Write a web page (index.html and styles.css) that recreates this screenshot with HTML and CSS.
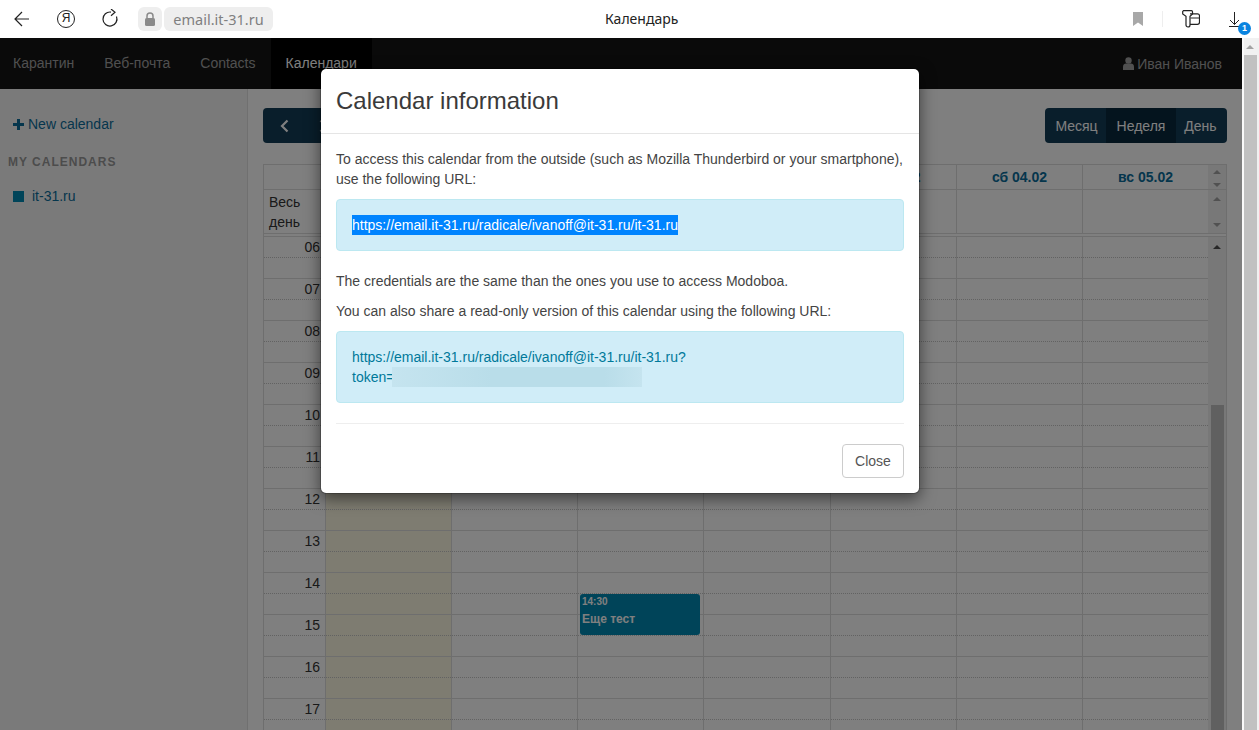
FILE: index.html
```html
<!DOCTYPE html>
<html lang="ru">
<head>
    <meta charset="utf-8"/>
    <title>Календарь</title>
    <link rel="stylesheet" href="styles.css">
</head>
<body>
    <div class="toolbar">
        <div class="tb-left">
            <svg class="tb-back" width="16" height="16" viewBox="0 0 16 16"><path d="M15 8H1M8 1L1 8l7 7" fill="none" stroke="#222" stroke-width="1.2"/></svg>
            <span class="tb-ya">Я</span>
            <svg class="tb-reload" width="18" height="20" viewBox="0 0 18 20"><path d="M15.500 7.500A7 7 0 1 1 10 3.100" fill="none" stroke="#222" stroke-width="1.200"/><path d="M10 0l4 3.300L10 6.800" fill="none" stroke="#222" stroke-width="1.200"/></svg>
            <span class="chip chip-lock">
                <svg width="12" height="14" viewBox="0 0 12 14"><path d="M3 6V4a3 3 0 0 1 6 0v2" fill="none" stroke="#8a8a8a" stroke-width="1.5"/><rect x="1" y="6" width="10" height="8" rx="1.5" fill="#8a8a8a"/></svg>
            </span>
            <span class="chip chip-url">email.it-31.ru</span>
        </div>
        <div class="tb-title">Календарь</div>
        <div class="tb-right">
            <svg width="10" height="14" viewBox="0 0 10 14"><path d="M0 0h10v14L5 10.5 0 14z" fill="#a8a8a8"/></svg>
            <span class="tb-sep"></span>
            <svg width="18" height="18" viewBox="0 0 18 18"><path d="M1.500.700h8a1 1 0 0 1 1 1V4L8 6.300V15a2 2 0 0 1-4 0V6.300L.700 4V1.500z" fill="none" stroke="#222" stroke-width="1.200"/><path d="M8 3.800h7.500a2 2 0 0 1 2 2v6.500a2 2 0 0 1-2 2H8M8.500 8h9" fill="none" stroke="#222" stroke-width="1.200"/></svg>
            <span class="tb-dl">
                <svg width="11" height="15" viewBox="0 0 11 15"><path d="M5.500 0v12.500M1 8l4.500 4.500L10 8M0 14.500h11" fill="none" stroke="#222" stroke-width="1"/></svg>
                <span class="tb-badge">1</span>
            </span>
        </div>
    </div>

    <div class="page">
        <div class="viewport">
            <nav class="navbar">
                <a class="nav-item nav-first">Карантин</a>
                <a class="nav-item">Веб-почта</a>
                <a class="nav-item">Contacts</a>
                <a class="nav-item active">Календари</a>
                <span class="nav-user">
                    <svg width="11" height="13" viewBox="0 0 11 13"><circle cx="5.500" cy="3.500" r="3.200" fill="currentColor"/><path d="M0 13V9.500C0 7.500 1.500 6.500 3 6.500h5c1.500 0 3 1 3 3V13z" fill="currentColor"/></svg>
                    Иван Иванов
                </span>
            </nav>

            <div class="content">
                <aside class="sidebar">
                    <a class="new-cal">
                        <svg width="11" height="11" viewBox="0 0 11 11"><path d="M4 0h3v4h4v3H7v4H4V7H0V4h4z" fill="currentColor"/></svg>
                        New calendar
                    </a>
                    <div class="side-header">MY CALENDARS</div>
                    <a class="side-cal"><span class="side-square"></span>it-31.ru</a>
                </aside>

                <main class="main">
                    <div class="cal-bar">
                        <div class="btn-group">
                            <button class="btn btn-prev">
                                <svg width="9" height="14" viewBox="0 0 9 14"><path d="M7.500 1.500L2 7l5.500 5.500" fill="none" stroke="currentColor" stroke-width="2.200"/></svg>
                            </button>
                            <button class="btn btn-next">
                                <svg width="9" height="14" viewBox="0 0 9 14"><path d="M1.500 1.500L7 7l-5.500 5.500" fill="none" stroke="currentColor" stroke-width="2.200"/></svg>
                            </button>
                        </div>
                        <div class="btn-group">
                            <button class="btn btn-month">Месяц</button>
                            <button class="btn btn-week">Неделя</button>
                            <button class="btn btn-day">День</button>
                        </div>
                    </div>

                    <div class="cal">
                        <div class="cal-row cal-head">
                            <div class="head-cell"></div>
                            <div class="head-cell day"></div>
                            <div class="head-cell day"></div>
                            <div class="head-cell day"></div>
                            <div class="head-cell day"></div>
                            <div class="head-cell day">пт 03.02</div>
                            <div class="head-cell day">сб 04.02</div>
                            <div class="head-cell day">вс 05.02</div>
                            <div class="scroll-cell scroll-head"><i class="arr up"></i><i class="arr down"></i></div>
                        </div>
                        <div class="cal-row cal-allday">
                            <div class="allday-label">Весь день</div>
                            <div class="day"></div><div class="day"></div><div class="day"></div><div class="day"></div><div class="day"></div><div class="day"></div><div class="day"></div>
                            <div class="scroll-cell scroll-allday"><i class="arr up"></i><i class="arr down"></i></div>
                        </div>

                        <div class="cal-body">
                            <div class="hours">
                                <div class="cal-row hour"><div class="cell time">06</div><div class="cell today"></div><div class="cell"></div><div class="cell"></div><div class="cell"></div><div class="cell"></div><div class="cell"></div><div class="cell"></div></div>
                                <div class="cal-row hour"><div class="cell time">07</div><div class="cell today"></div><div class="cell"></div><div class="cell"></div><div class="cell"></div><div class="cell"></div><div class="cell"></div><div class="cell"></div></div>
                                <div class="cal-row hour"><div class="cell time">08</div><div class="cell today"></div><div class="cell"></div><div class="cell"></div><div class="cell"></div><div class="cell"></div><div class="cell"></div><div class="cell"></div></div>
                                <div class="cal-row hour"><div class="cell time">09</div><div class="cell today"></div><div class="cell"></div><div class="cell"></div><div class="cell"></div><div class="cell"></div><div class="cell"></div><div class="cell"></div></div>
                                <div class="cal-row hour"><div class="cell time">10</div><div class="cell today"></div><div class="cell"></div><div class="cell"></div><div class="cell"></div><div class="cell"></div><div class="cell"></div><div class="cell"></div></div>
                                <div class="cal-row hour"><div class="cell time">11</div><div class="cell today"></div><div class="cell"></div><div class="cell"></div><div class="cell"></div><div class="cell"></div><div class="cell"></div><div class="cell"></div></div>
                                <div class="cal-row hour"><div class="cell time">12</div><div class="cell today"></div><div class="cell"></div><div class="cell"></div><div class="cell"></div><div class="cell"></div><div class="cell"></div><div class="cell"></div></div>
                                <div class="cal-row hour"><div class="cell time">13</div><div class="cell today"></div><div class="cell"></div><div class="cell"></div><div class="cell"></div><div class="cell"></div><div class="cell"></div><div class="cell"></div></div>
                                <div class="cal-row hour">
                                    <div class="cell time">14</div><div class="cell today"></div><div class="cell"></div>
                                    <div class="cell">
                                        <div class="event">
                                            <div class="event-time">14:30</div>
                                            <div class="event-title">Еще тест</div>
                                        </div>
                                    </div>
                                    <div class="cell"></div><div class="cell"></div><div class="cell"></div><div class="cell"></div>
                                </div>
                                <div class="cal-row hour"><div class="cell time">15</div><div class="cell today"></div><div class="cell"></div><div class="cell"></div><div class="cell"></div><div class="cell"></div><div class="cell"></div><div class="cell"></div></div>
                                <div class="cal-row hour"><div class="cell time">16</div><div class="cell today"></div><div class="cell"></div><div class="cell"></div><div class="cell"></div><div class="cell"></div><div class="cell"></div><div class="cell"></div></div>
                                <div class="cal-row hour"><div class="cell time">17</div><div class="cell today"></div><div class="cell"></div><div class="cell"></div><div class="cell"></div><div class="cell"></div><div class="cell"></div><div class="cell"></div></div>
                            </div>
                            <div class="scroll-body">
                                <i class="arr up arr-dark"></i>
                                <div class="scroll-thumb"></div>
                            </div>
                        </div>
                    </div>
                </main>
            </div>

            <div class="backdrop">
                <div class="modal">
                    <div class="modal-header">
                        <h4 class="modal-title">Calendar information</h4>
                    </div>
                    <div class="modal-body">
                        <p>To access this calendar from the outside (such as Mozilla Thunderbird or your smartphone), use the following URL:</p>
                        <div class="alert"><span class="selected">https://email.it-31.ru/radicale/ivanoff@it-31.ru/it-31.ru</span></div>
                        <p>The credentials are the same than the ones you use to access Modoboa.</p>
                        <p>You can also share a read-only version of this calendar using the following URL:</p>
                        <div class="alert">https://email.it-31.ru/radicale/ivanoff@it-31.ru/it-31.ru?<br>token=<span class="token"></span></div>
                        <hr class="divider">
                        <div class="modal-footer">
                            <button class="btn-close">Close</button>
                        </div>
                    </div>
                </div>
            </div>
        </div>

        <div class="scrollbar">
            <i class="arr up arr-page"></i>
            <div class="page-thumb"></div>
        </div>
    </div>
</body>
</html>
```

FILE: styles.css
```css
*{
    margin: 0;
    padding: 0;
    box-sizing: border-box;
}
body{
    height: 730px;
    overflow: hidden;
    background: white;
    color: #333;
    font-family: "Liberation Sans", Arial, sans-serif;
    font-size: 14px;
    line-height: 20px;
}

/* browser toolbar */
.toolbar{
    display: flex;
    align-items: center;
    height: 38px;
    background: white;
}
.tb-left{
    display: flex;
    align-items: center;
    flex: 0 0 605px;
}
.tb-back{
    margin-left: 14px;
}
.tb-ya{
    width: 18px;
    height: 18px;
    margin-left: 27px;
    border: 1.3px solid #222;
    border-radius: 50%;
    color: #222;
    font-size: 12px;
    line-height: 15px;
    text-align: center;
}
.tb-reload{
    margin-left: 26px;
}
.chip{
    display: flex;
    align-items: center;
    justify-content: center;
    height: 24px;
    background: #eeeeee;
    border-radius: 6px;
}
.chip-lock{
    width: 24px;
    margin-left: 19px;
}
.chip-url{
    width: 109px;
    margin-left: 2px;
    color: #808080;
    font-family: "Noto Sans", sans-serif;
    font-size: 14.5px;
}
.tb-title{
    color: #222;
    font-family: "Noto Sans", sans-serif;
    font-size: 14px;
}
.tb-right{
    display: flex;
    align-items: center;
    margin-left: auto;
    padding-right: 19px;
}
.tb-sep{
    width: 1px;
    height: 16px;
    margin: 0 19px;
    background: #eeeeee;
}
.tb-dl{
    position: relative;
    display: flex;
    margin-left: 29px;
}
.tb-badge{
    position: absolute;
    top: 10px;
    left: 9px;
    width: 13px;
    height: 13px;
    border-radius: 50%;
    background: #0a84e0;
    color: white;
    font-size: 9px;
    font-weight: bold;
    line-height: 13px;
    text-align: center;
}

/* page under the toolbar */
.page{
    display: flex;
    height: 692px;
}
.viewport{
    position: relative;
    flex: 1;
    overflow: hidden;
    background: white;
}
.scrollbar{
    flex: 0 0 17px;
    padding-top: 7px;
    background: #f1f1f1;
    border-left: 2px solid #fafafa;
    overflow: hidden;
}
.page-thumb{
    width: 13px;
    height: 700px;
    margin-top: 6px;
    background: #c1c1c1;
}

/* scrollbar arrows */
.arr{
    display: block;
    width: 0;
    height: 0;
    border-left: 4px solid transparent;
    border-right: 4px solid transparent;
}
.arr.up{
    border-bottom: 4px solid #a3a3a3;
}
.arr.down{
    border-top: 4px solid #a3a3a3;
}
.arr.up.arr-dark{
    border-bottom-color: #505050;
}
.arr.up.arr-page{
    margin-left: 2px;
    border-bottom-color: #a3a3a3;
}

/* app navbar */
.navbar{
    display: flex;
    height: 51px;
    background: #151515;
}
.nav-item{
    padding: 0 15px;
    color: #a0a0a0;
    line-height: 50px;
}
.nav-first{
    padding-left: 13px;
}
.nav-item.active{
    background: black;
    color: white;
}
.nav-user{
    display: flex;
    align-items: center;
    gap: 3px;
    margin-left: auto;
    padding-right: 20px;
    color: #a0a0a0;
}

.content{
    display: flex;
    height: 641px;
}
.sidebar{
    flex: 0 0 248px;
    padding-top: 25px;
    background: #f5f5f5;
    border-right: 1px solid #e0e0e0;
}
.new-cal{
    display: flex;
    align-items: center;
    gap: 4px;
    padding-left: 13px;
    color: #0a6c9a;
}
.side-header{
    margin-top: 18px;
    padding-left: 8px;
    color: #999;
    font-size: 12px;
    font-weight: bold;
    letter-spacing: 1px;
}
.side-cal{
    display: flex;
    align-items: center;
    gap: 8px;
    margin-top: 14px;
    padding-left: 13px;
    color: #0a6c9a;
}
.side-square{
    width: 11px;
    height: 11px;
    background: #0088b2;
}

.main{
    flex: 1;
    min-width: 0;
    padding: 19px 15px 0;
}
.cal-bar{
    display: flex;
    justify-content: space-between;
    height: 35px;
    margin-bottom: 21px;
}
.btn-group{
    display: flex;
    overflow: hidden;
    border-radius: 4px;
}
.btn{
    height: 35px;
    border: none;
    background: #133d57;
    color: white;
    font-family: inherit;
    font-size: 14px;
}
.btn-month{
    width: 61px;
    padding-left: 2px;
}
.btn-week{
    width: 70px;
    background: #08283c;
}
.btn-day{
    width: 51px;
    padding-right: 2px;
}
.btn-prev{
    display: flex;
    align-items: center;
    width: 42px;
    padding-left: 17px;
}
.btn-next{
    display: flex;
    align-items: center;
    width: 40px;
    padding-left: 14px;
}

/* calendar table */
.cal{
    height: 600px;
    overflow: hidden;
    border: 1px solid #dddddd;
    border-bottom: none;
}
.cal-row{
    display: grid;
    grid-template-columns: 61px 126px 126px 126px 127px 126px 126px 126px;
}
.cal-head, .cal-allday{
    grid-template-columns: 61px 126px 126px 126px 127px 126px 126px 126px 18px;
    border-bottom: 1px solid #dddddd;
}
.cal-head{
    height: 25px;
}
.cal-allday{
    height: 44px;
}
.head-cell{
    color: #0a6c9a;
    font-weight: bold;
    line-height: 24px;
    text-align: center;
}
.day{
    border-left: 1px solid #dddddd;
}
.allday-label{
    padding: 2px 30px 0 5px;
    line-height: 20px;
}
.scroll-cell{
    display: flex;
    flex-direction: column;
    justify-content: space-between;
    align-items: center;
    background: #f1f1f1;
}
.scroll-head{
    padding: 5px 0 2px;
}
.scroll-allday{
    padding: 7px 0 6px;
}
.cal-body{
    display: flex;
    margin-top: 2px;
    border-top: 1px solid #dddddd;
}
.hours{
    width: 944px;
}
.hour{
    height: 42px;
    border-bottom: 1px solid #dddddd;
}
.cell{
    position: relative;
    height: 41px;
    border-left: 1px solid #dddddd;
    background-image: repeating-linear-gradient(90deg, #c4c4c4 0 1px, transparent 1px 2px);
    background-size: 100% 1px;
    background-position: 0 20px;
    background-repeat: no-repeat;
}
.time{
    padding-right: 5px;
    border-left: none;
    text-align: right;
}
.today{
    background-color: #fcf8e3;
}
.event{
    position: absolute;
    top: 21px;
    left: 2px;
    z-index: 1;
    width: 120px;
    height: 41px;
    padding: 1px 2px;
    border-radius: 3px;
    background: #0088b2;
    color: white;
    font-weight: bold;
}
.event-time{
    font-size: 10px;
    line-height: 14px;
}
.event-title{
    margin-top: 2px;
    font-size: 12px;
    line-height: 16px;
}
.scroll-body{
    flex: 0 0 18px;
    padding-top: 8px;
    background: #f1f1f1;
}
.scroll-body .arr{
    margin-left: 5px;
}
.scroll-thumb{
    width: 13px;
    height: 400px;
    margin: 156px 0 0 3px;
    background: #c1c1c1;
}

/* modal */
.backdrop{
    position: absolute;
    inset: 0;
    z-index: 10;
    padding: 30px 0 0 320px;
    background: rgba(0, 0, 0, 0.5);
}
.modal{
    width: 600px;
    background: white;
    border: 1px solid rgba(0, 0, 0, 0.2);
    border-radius: 6px;
    box-shadow: 0 5px 15px rgba(0, 0, 0, 0.5);
    background-clip: padding-box;
}
.modal-header{
    padding: 15px;
    border-bottom: 1px solid #e5e5e5;
}
.modal-title{
    color: #3a3a3a;
    font-size: 24px;
    font-weight: normal;
    line-height: 34px;
}
.modal-body{
    padding: 15px 15px 15px;
    color: #444;
}
.modal-body p{
    margin-bottom: 10px;
}
.alert{
    margin-bottom: 20px;
    padding: 15px;
    border: 1px solid #bce8f1;
    border-radius: 4px;
    background: #d0edf8;
    color: #00799a;
}
.selected{
    display: inline-block;
    background: #0084ff;
    color: white;
}
.token{
    display: inline-block;
    width: 250px;
    height: 20px;
    margin-left: -2px;
    vertical-align: top;
    background: linear-gradient(90deg, #c5e4ef, #b9dde9 40%, #b9dde9 85%, #c5e4ef);
}
.divider{
    height: 1px;
    margin-bottom: 20px;
    border: none;
    background: #eeeeee;
}
.modal-footer{
    display: flex;
    justify-content: flex-end;
}
.btn-close{
    width: 62px;
    height: 34px;
    border: 1px solid #cccccc;
    border-radius: 4px;
    background: white;
    color: #555;
    font-family: inherit;
    font-size: 14px;
}
```
